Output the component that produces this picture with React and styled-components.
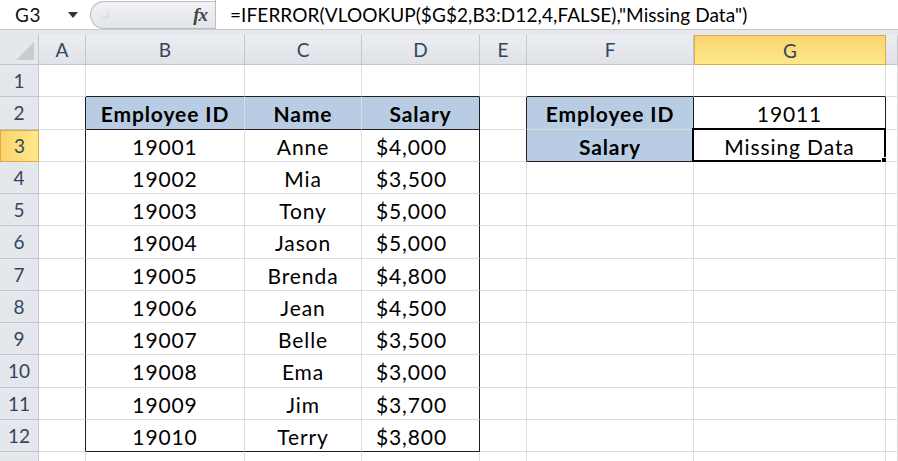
import React from "react";
import styled, { createGlobalStyle, css } from "styled-components";

const GlobalStyle = createGlobalStyle`
  html, body {
    margin: 0;
    padding: 0;
    background: #ffffff;
  }
  body {
    font-family: Lato, "Open Sans", sans-serif;
    overflow: hidden;
  }
`;

const GRID = "#dadcdd";
const DARK = "#1f1f1f";
const COLS = [39, 47, 159, 117, 118, 47, 167, 192, 12];
const LETTERS = ["A", "B", "C", "D", "E", "F", "G", ""];
const ROW_H = 32.25;

const employees = [
  ["19001", "Anne", "$4,000"],
  ["19002", "Mia", "$3,500"],
  ["19003", "Tony", "$5,000"],
  ["19004", "Jason", "$5,000"],
  ["19005", "Brenda", "$4,800"],
  ["19006", "Jean", "$4,500"],
  ["19007", "Belle", "$3,500"],
  ["19008", "Ema", "$3,000"],
  ["19009", "Jim", "$3,700"],
  ["19010", "Terry", "$3,800"],
];

const Wrapper = styled.div`
  width: 898px;
  height: 461px;
  overflow: hidden;
  background: #fff;
`;

const FormulaBar = styled.div`
  display: flex;
  align-items: stretch;
  height: 29px;
  border-bottom: 1px solid #c6cad0;
  background: #fff;
`;

const NameBox = styled.div`
  width: 88px;
  display: flex;
  align-items: center;
  justify-content: space-between;
  padding: 0 10px 0 15px;
  box-sizing: border-box;
  font-size: 19px;
  letter-spacing: 0.5px;
  color: #111;
`;

const DropArrow = styled.span`
  width: 0;
  height: 0;
  border-left: 5px solid transparent;
  border-right: 5px solid transparent;
  border-top: 6px solid #333;
`;

const FxPill = styled.div`
  width: 125px;
  margin: 1px 0 0 2px;
  display: flex;
  align-items: center;
  justify-content: space-between;
  padding: 0 8px 0 10px;
  box-sizing: border-box;
  background: linear-gradient(#f1f2f4, #e3e5e8);
  border: 1px solid #b9bdc3;
  border-right: none;
  border-radius: 15px 0 0 15px;
`;

const Dot = styled.span`
  width: 8px;
  height: 8px;
  border-radius: 50%;
  background: radial-gradient(circle at 40% 35%, #f6f6f6, #c9ccd0);
`;

const Fx = styled.span`
  font-family: "Liberation Serif", serif;
  font-style: italic;
  font-weight: bold;
  font-size: 19px;
  color: #444;
  letter-spacing: -1px;
`;

const FormulaInput = styled.div`
  flex: 1;
  display: flex;
  align-items: center;
  padding-left: 14px;
  border-left: 1px solid #b9bdc3;
  font-size: 19px;
  letter-spacing: 0.08px;
  color: #000;
  white-space: nowrap;
`;

const Strip = styled.div`
  height: 5px;
  background: #e4e7eb;
`;

const Sheet = styled.div`
  display: grid;
  grid-template-columns: ${COLS.map((w) => `${w}px`).join(" ")};
  grid-template-rows: 30px repeat(13, ${ROW_H}px);
`;

const headerBase = css`
  display: flex;
  align-items: center;
  justify-content: center;
  box-sizing: border-box;
  font-size: 19px;
  color: #34465c;
  border-right: 1px solid #c3c7cd;
  border-bottom: 1px solid #c3c7cd;
`;

const ColHeader = styled.div`
  ${headerBase}
  background: ${({ $active }) =>
    $active
      ? "linear-gradient(#f9d46e, #ffe88a)"
      : "linear-gradient(#eceef1, #dfe2e7)"};
  ${({ $active }) =>
    $active &&
    css`
      border: 1px solid #e2a845;
    `}
`;

const RowHeader = styled.div`
  ${headerBase}
  background: ${({ $active }) =>
    $active ? "linear-gradient(90deg, #f9d46e, #ffe88a)" : "#e4e7eb"};
  ${({ $active }) =>
    $active &&
    css`
      border: 1px solid #e2a845;
    `}
`;

const Corner = styled.div`
  ${headerBase}
  background: #e4e7eb;
  position: relative;
  &::after {
    content: "";
    position: absolute;
    right: 4px;
    bottom: 4px;
    border-left: 18px solid transparent;
    border-bottom: 18px solid #c9cdd2;
  }
`;

const Cell = styled.div`
  position: relative;
  display: flex;
  align-items: center;
  justify-content: center;
  box-sizing: border-box;
  padding: 2px ${({ $padR }) => $padR || 0}px 0 0;
  font-size: 21px;
  letter-spacing: 0.9px;
  color: #000;
  font-weight: ${({ $bold }) => ($bold ? 700 : 400)};
  background: ${({ $fill }) => $fill || "#fff"};
  border-right: 1px solid ${({ $darkR }) => ($darkR ? DARK : GRID)};
  border-bottom: 1px solid ${({ $darkB }) => ($darkB ? DARK : GRID)};
  white-space: nowrap;
`;

const Selection = styled.div`
  position: absolute;
  left: -2px;
  top: -2px;
  right: -1px;
  bottom: -1px;
  border: 2px solid #000;
  pointer-events: none;
`;

const FillHandle = styled.div`
  position: absolute;
  right: -4px;
  bottom: -4px;
  width: 5px;
  height: 5px;
  background: #000;
  border: 1px solid #fff;
`;

const BLUE = "#b8cce4";

function content(r, c) {
  if (r === 2 && c === 2) return { text: "Employee ID", bold: true, fill: BLUE };
  if (r === 2 && c === 3) return { text: "Name", bold: true, fill: BLUE };
  if (r === 2 && c === 4) return { text: "Salary", bold: true, fill: BLUE };
  if (r >= 3 && r <= 12 && c >= 2 && c <= 4) {
    const row = employees[r - 3];
    return { text: row[c - 2], padR: c === 4 ? 18 : 0 };
  }
  if (c === 6 && r === 2) return { text: "Employee ID", bold: true, fill: BLUE };
  if (c === 6 && r === 3) return { text: "Salary", bold: true, fill: BLUE };
  if (c === 7 && r === 2) return { text: "19011" };
  if (c === 7 && r === 3) return { text: "Missing Data" };
  return { text: "" };
}

function darkRight(r, c) {
  if (r >= 2 && r <= 12 && (c === 1 || c === 4)) return true;
  if (r >= 2 && r <= 3 && c >= 5 && c <= 7) return true;
  return false;
}

function darkBottom(r, c) {
  if (c >= 2 && c <= 4 && (r === 1 || r === 2 || r === 12)) return true;
  if ((c === 6 || c === 7) && (r === 1 || r === 3)) return true;
  if (c === 7 && r === 2) return true;
  return false;
}

const App = () => {
  const rows = Array.from({ length: 13 }, (_, i) => i + 1);

  return (
    <Wrapper>
      <GlobalStyle />
      <FormulaBar>
        <NameBox>
          G3
          <DropArrow />
        </NameBox>
        <FxPill>
          <Dot />
          <Fx>fx</Fx>
        </FxPill>
        <FormulaInput>
          =IFERROR(VLOOKUP($G$2,B3:D12,4,FALSE),"Missing Data")
        </FormulaInput>
      </FormulaBar>
      <Strip />
      <Sheet>
        <Corner />
        {LETTERS.map((l, i) => (
          <ColHeader key={i} $active={l === "G"}>
            {l}
          </ColHeader>
        ))}
        {rows.map((r) => (
          <React.Fragment key={r}>
            {/* row 13 is cut by the window edge, its number stays hidden */}
            <RowHeader $active={r === 3}>{r < 13 ? r : ""}</RowHeader>
            {COLS.slice(1).map((_, i) => {
              const c = i + 1;
              const cell = content(r, c);
              return (
                <Cell
                  key={c}
                  $bold={cell.bold}
                  $fill={cell.fill}
                  $padR={cell.padR}
                  $darkR={darkRight(r, c)}
                  $darkB={darkBottom(r, c)}
                >
                  {cell.text}
                  {r === 3 && c === 7 && (
                    <Selection>
                      <FillHandle />
                    </Selection>
                  )}
                </Cell>
              );
            })}
          </React.Fragment>
        ))}
      </Sheet>
    </Wrapper>
  );
};

export default App;
